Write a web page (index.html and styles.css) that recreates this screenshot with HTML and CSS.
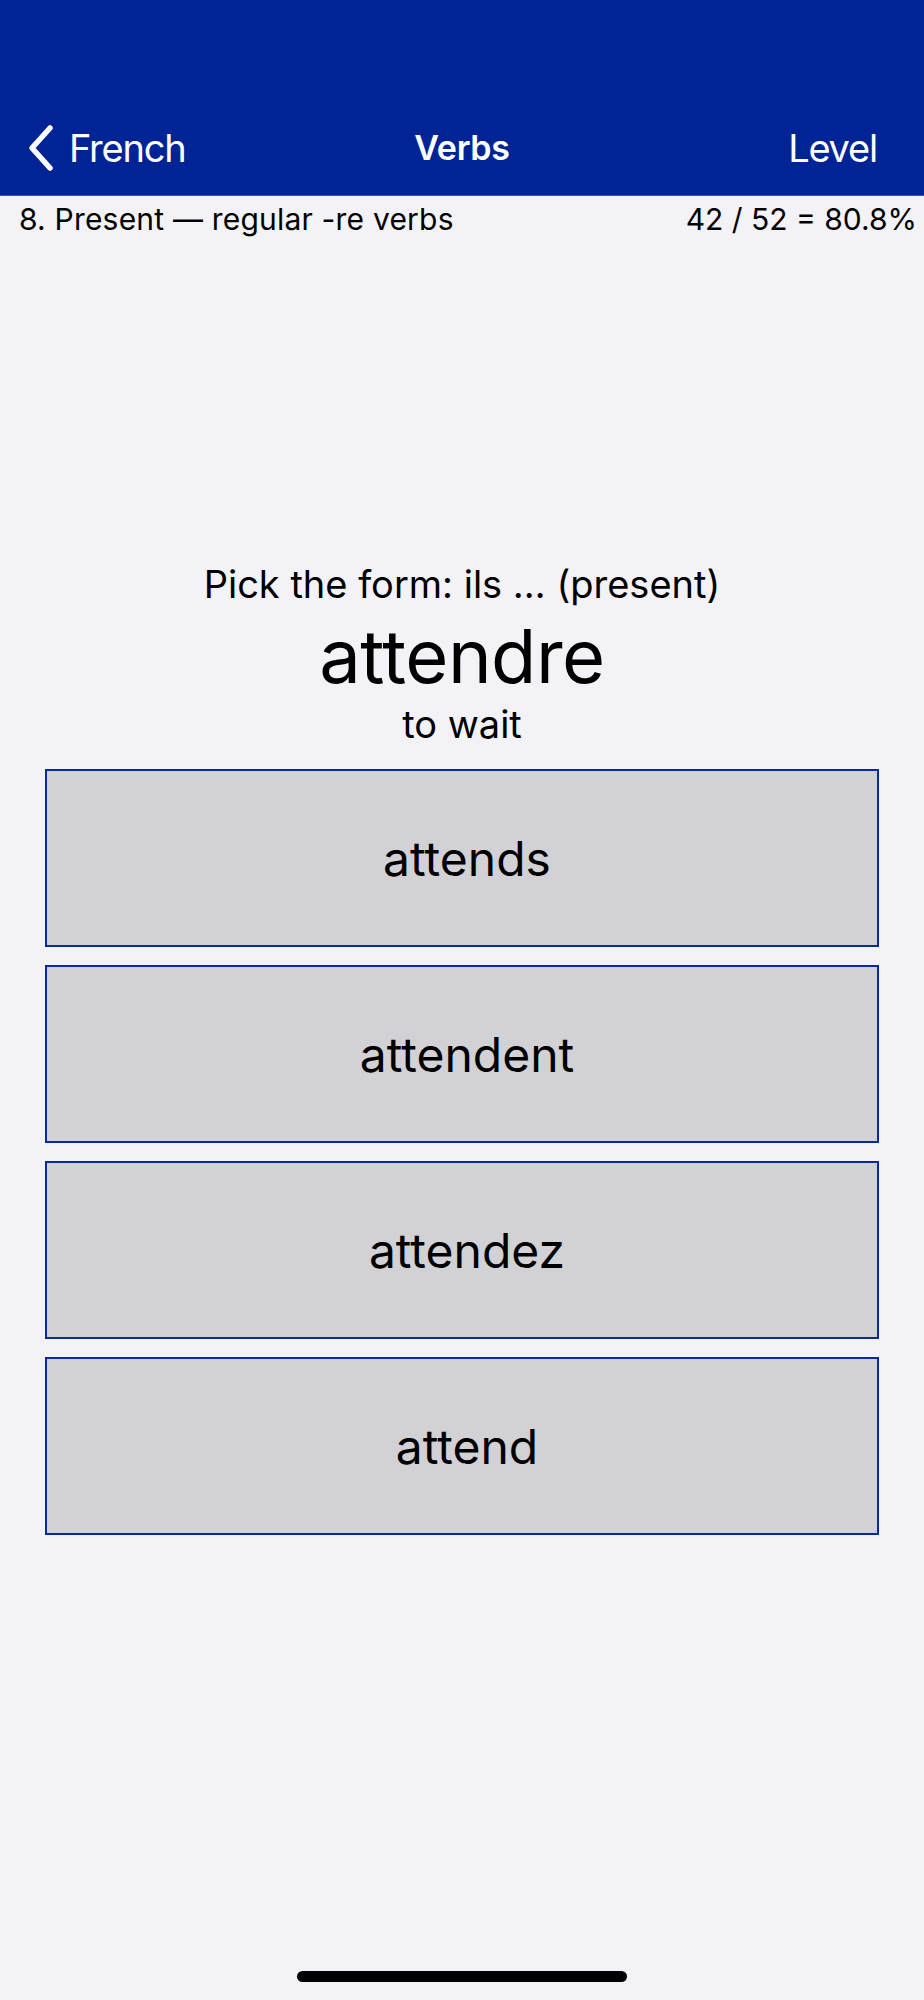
FILE: index.html
```html
<!DOCTYPE html>
<html lang="en">
<head>
<meta charset="utf-8">
<title>Verbs</title>
<link rel="stylesheet" href="styles.css">
</head>
<body>
<div class="screen">
  <header class="navbar">
    <div class="nav-row">
      <div class="nav-back">
        <svg class="chevron" width="28" height="48" viewBox="0 0 28 48" aria-hidden="true">
          <path d="M23 4 L5 24 L23 44" fill="none" stroke="#ffffff" stroke-width="5.5" stroke-linecap="round" stroke-linejoin="round"/>
        </svg>
        <span class="nav-back-label">French</span>
      </div>
      <div class="nav-title">Verbs</div>
      <div class="nav-right">Level</div>
    </div>
  </header>
  <div class="info-row">
    <span class="lesson">8. Present — regular -re verbs</span>
    <span class="score">42 / 52 = 80.8%</span>
  </div>
  <main class="quiz">
    <div class="prompt">Pick the form: ils … (present)</div>
    <div class="word">attendre</div>
    <div class="meaning">to wait</div>
    <div class="choices">
      <button class="choice">attends</button>
      <button class="choice">attendent</button>
      <button class="choice">attendez</button>
      <button class="choice">attend</button>
    </div>
  </main>
  <div class="home-area">
    <div class="home-indicator"></div>
  </div>
</div>
</body>
</html>
```
FILE: styles.css
```css
html, body {
  margin: 0;
  padding: 0;
}
body {
  background: #f2f2f7;
  font-family: Inter, "Noto Sans", "Liberation Sans", sans-serif;
  color: #000000;
}
.screen {
  width: 924px;
  min-height: 2000px;
  display: flex;
  flex-direction: column;
}
.navbar {
  background: #002496;
  height: 196px;
  box-sizing: border-box;
  padding-top: 100px;
  border-bottom: 1px solid #3a55b0;
}
.nav-row {
  height: 95px;
  display: grid;
  grid-template-columns: 1fr auto 1fr;
  align-items: center;
  color: #ffffff;
}
.nav-back {
  display: flex;
  align-items: center;
  padding-left: 27px;
  gap: 14px;
}
.chevron {
  display: block;
}
.nav-back-label {
  font-size: 38px;
  letter-spacing: -1.2px;
}
.nav-title {
  font-size: 34px;
  font-weight: 600;
  letter-spacing: -0.3px;
  text-align: center;
}
.nav-right {
  font-size: 38px;
  letter-spacing: -1.2px;
  text-align: right;
  padding-right: 47px;
}
.info-row {
  display: flex;
  justify-content: space-between;
  padding: 6px 7px 0 19px;
  font-size: 30px;
  line-height: 34px;
}
.lesson {
  letter-spacing: 0.2px;
}
.quiz {
  display: flex;
  flex-direction: column;
  align-items: center;
  padding-top: 325px;
}
.prompt {
  font-size: 38px;
  line-height: 46px;
}
.word {
  font-size: 74px;
  line-height: 84px;
  margin-top: 7px;
  letter-spacing: -0.5px;
}
.meaning {
  font-size: 38px;
  line-height: 46px;
  margin-top: 3px;
}
.choices {
  align-self: stretch;
  display: flex;
  flex-direction: column;
  gap: 18px;
  padding: 0 45px;
  margin-top: 22px;
}
.choice {
  height: 178px;
  box-sizing: border-box;
  border: 2px solid #0a2a9c;
  background: #d1d1d6;
  font-family: Inter, "Noto Sans", "Liberation Sans", sans-serif;
  font-size: 48px;
  color: #000000;
  padding: 0 0 0 10px;
  margin: 0;
  border-radius: 0;
}
.home-area {
  margin-top: auto;
  display: flex;
  justify-content: center;
  padding-bottom: 18px;
}
.home-indicator {
  width: 330px;
  height: 11px;
  border-radius: 6px;
  background: #000000;
}
```
